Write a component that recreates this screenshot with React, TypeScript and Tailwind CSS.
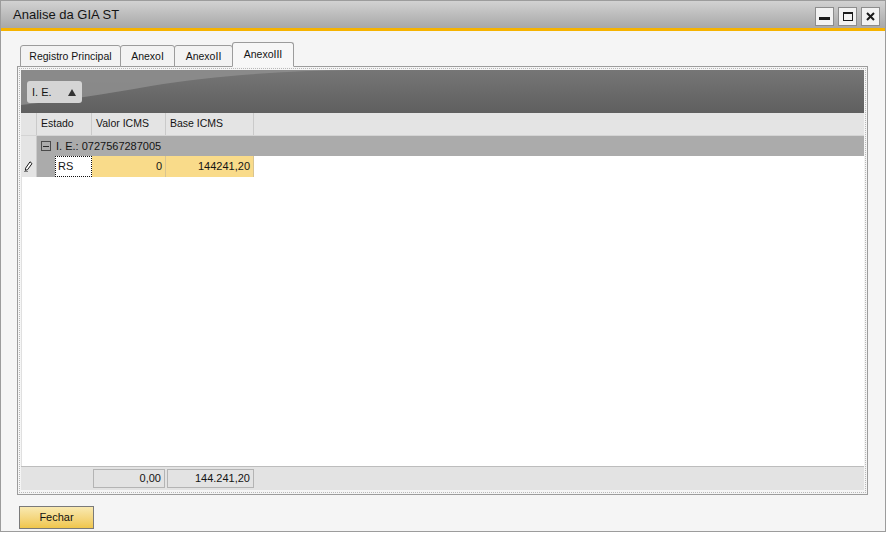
import React from "react";

const tabs = [
  { label: "Registro Principal", w: "w-[101px]" },
  { label: "AnexoI", w: "w-[55px]" },
  { label: "AnexoII", w: "w-[59px]" },
  { label: "AnexoIII", w: "w-[62px]", active: true },
];

function WinButton({ children }: { children: React.ReactNode }) {
  return (
    <div className="w-[19px] h-[19px] border border-[#8c8c8c] bg-[#f2f2f2] flex items-center justify-center">
      {children}
    </div>
  );
}

function Pencil() {
  return (
    <svg width="9" height="11" viewBox="0 0 9 11">
      <path d="M6 0.8 L8 2.6 L3.6 8.6 L1.4 9.4 L1.6 7.2 Z" fill="white" stroke="#1a1a1a" strokeWidth="1" />
      <path d="M0.5 10.5 H4" stroke="#1a1a1a" strokeWidth="1" strokeDasharray="1 1" />
    </svg>
  );
}

export default function App() {
  return (
    <div className="w-[887px] h-[533px] bg-white font-['Liberation_Sans',Arial,sans-serif] text-[#141414]">
      <div className="w-[886px] h-[532px] border border-[#9c9c9c] flex flex-col bg-[#f5f5f5]">
        {/* title bar */}
        <div className="h-[27px] flex items-start justify-between bg-gradient-to-b from-[#d2d2d2] to-[#a8a8a8] pl-[12px] pr-[5px]">
          <span className="text-[13px] leading-[28px]">Analise da GIA ST</span>
          <div className="flex gap-[4px] pt-[6px]">
            <WinButton>
              <div className="w-[11px] h-[3px] bg-[#1a1a1a] mt-[3px]" />
            </WinButton>
            <WinButton>
              <div className="w-[10px] h-[9px] border border-[#1a1a1a] border-t-2" />
            </WinButton>
            <WinButton>
              <svg width="9" height="9" viewBox="0 0 9 9">
                <path d="M1 1 L8 8 M8 1 L1 8" stroke="#1a1a1a" strokeWidth="2" />
              </svg>
            </WinButton>
          </div>
        </div>
        <div className="h-[3px] bg-[#f6b300]" />

        {/* body */}
        <div className="flex-1 flex flex-col px-[16px] pt-[11px]">
          {/* tabs */}
          <div className="flex items-end h-[25px] pl-[3px] relative z-10">
            {tabs.map((t, i) => (
              <div
                key={i}
                className={`${t.w} ${
                  t.active ? "h-[25px] bg-[#f7f7f7] border-b-[#f7f7f7]" : "h-[22px] bg-[#f3f3f3] border-b-[#9c9c9c]"
                } -ml-px first:ml-0 border border-[#9c9c9c] rounded-t-[3px] flex items-center justify-center text-[10.5px] pt-[1px]`}
              >
                {t.label}
              </div>
            ))}
          </div>

          {/* panel */}
          <div className="w-[851px] h-[429px] -mt-px border border-[#9c9c9c] p-[1px]">
            <div className="w-full h-full border border-dotted border-[#b8b8b8] p-[1px]">
              <div className="w-[843px] h-[420px] flex flex-col bg-white text-[10.5px]">
                {/* group-by band */}
                <div className="h-[43px] relative bg-gradient-to-b from-[#767676] to-[#5f5f5f] shrink-0">
                  <svg className="absolute left-0 top-0" width="843" height="43" viewBox="0 0 843 43">
                    <path
                      d="M0 0 H330 C260 1 190 6 130 16 C85 24 40 31 0 35 Z"
                      fill="#8e8e8e"
                      opacity="0.85"
                    />
                  </svg>
                  <div className="absolute left-[6px] top-[11px] w-[55px] h-[22px] rounded-[3px] bg-[#d5d5d5] flex items-center justify-between pl-[5px] pr-[6px] text-[11px]">
                    <span>I. E.</span>
                    <svg width="8" height="7" viewBox="0 0 8 7">
                      <path d="M4 0 L8 7 H0 Z" fill="#333" />
                    </svg>
                  </div>
                </div>

                {/* column header */}
                <div className="h-[23px] flex bg-[#e4e4e4] border-b border-[#d4d4d4] shrink-0">
                  <div className="w-[16px] border-r border-[#cacaca]" />
                  <div className="w-[55px] border-r border-[#cacaca] pl-[4px] flex items-center">Estado</div>
                  <div className="w-[74px] border-r border-[#cacaca] pl-[4px] flex items-center">Valor ICMS</div>
                  <div className="w-[88px] border-r border-[#cacaca] pl-[4px] flex items-center">Base ICMS</div>
                  <div className="flex-1" />
                </div>

                {/* group row */}
                <div className="h-[20px] flex shrink-0">
                  <div className="w-[16px] bg-[#e4e4e4] border-r border-[#cacaca]" />
                  <div className="flex-1 bg-[#ababab] flex items-center pl-[4px]">
                    <div className="w-[10px] h-[10px] border border-[#4a4a4a] flex items-center justify-center">
                      <div className="w-[6px] h-px bg-[#2a2a2a]" />
                    </div>
                    <span className="ml-[5px] text-[11px]">I. E.: 0727567287005</span>
                  </div>
                </div>

                {/* data row */}
                <div className="h-[21px] flex shrink-0">
                  <div className="w-[16px] bg-[#e4e4e4] border-r border-[#cacaca] flex items-center justify-center">
                    <Pencil />
                  </div>
                  <div className="w-[18px] bg-[#ababab]" />
                  <div className="w-[37px] bg-white border border-dotted border-[#111] pl-[2px] flex items-center text-[11px]">RS</div>
                  <div className="w-[74px] bg-[#f9db8a] border-r border-[#d9c490] pr-[3px] flex items-center justify-end text-[11px]">0</div>
                  <div className="w-[88px] bg-[#f9db8a] border-r border-[#d9c490] pr-[3px] flex items-center justify-end text-[11px]">144241,20</div>
                  <div className="flex-1" />
                </div>

                <div className="flex-1 border-l border-[#e0e0e0]" />

                {/* footer totals */}
                <div className="h-[24px] flex items-center bg-[#e3e3e3] border-t border-[#bdbdbd] shrink-0">
                  <div className="w-[72px]" />
                  <div className="w-[72px] h-[19px] border border-[#b4b4b4] flex items-center justify-end pr-[3px] text-[11px]">0,00</div>
                  <div className="w-[2px]" />
                  <div className="w-[87px] h-[19px] border border-[#b4b4b4] flex items-center justify-end pr-[3px] text-[11px]">144.241,20</div>
                </div>
              </div>
            </div>
          </div>

          {/* Fechar */}
          <div className="mt-[9px] ml-[2px]">
            <button className="w-[75px] h-[23px] border border-[#7a7a7a] bg-gradient-to-b from-[#f9e9b0] to-[#f0c64a] text-[11px] text-[#111]">
              Fechar
            </button>
          </div>
        </div>
      </div>
    </div>
  );
}
